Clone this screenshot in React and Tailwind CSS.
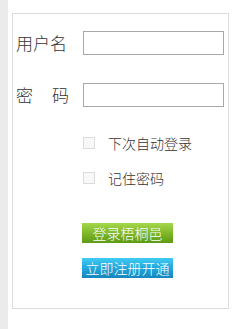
export default function App() {
  return (
    <div className="flex h-[329px] w-[247px] bg-white" style={{ fontFamily: '"Noto Sans CJK SC", sans-serif' }}>
      <div className="w-[8px] shrink-0 bg-[#ebebeb]" />
      <div className="pl-[4px] pt-[13px]">
        <div className="flex h-[296px] w-[217px] flex-col border border-[#dcdcdc] pl-[3px]">
          <div className="mt-[17px] flex items-center">
            <span className="w-[67px] text-[17px] font-light leading-[20px] text-[#333]">用户名</span>
            <input className="h-[24px] w-[141px] border border-[#a9a9a9] bg-white outline-none" />
          </div>
          <div className="mt-[28px] flex items-center">
            <span className="flex w-[67px] gap-[19px] text-[17px] font-light leading-[20px] text-[#333]">
              <span>密</span>
              <span>码</span>
            </span>
            <input type="password" className="h-[24px] w-[141px] border border-[#a9a9a9] bg-white outline-none" />
          </div>
          <div className="mt-[28px] flex flex-col gap-[19px] pl-[67px]">
            <label className="flex items-center">
              <span className="h-[12px] w-[12px] border border-[#dcdcdc] bg-[#f8f8f8]" />
              <span className="ml-[13px] text-[14px] font-light leading-[16px] text-[#333]">下次自动登录</span>
            </label>
            <label className="flex items-center">
              <span className="h-[12px] w-[12px] border border-[#dcdcdc] bg-[#f8f8f8]" />
              <span className="ml-[13px] text-[14px] font-light leading-[16px] text-[#333]">记住密码</span>
            </label>
          </div>
          <div className="mt-[37px] flex flex-col gap-[15px] pl-[66px]">
            <button className="h-[20px] w-[91px] bg-gradient-to-b from-[#a6d84a] via-[#7fb82a] to-[#5e9a14] text-[14px] font-light leading-[20px] text-white">
              登录梧桐邑
            </button>
            <button className="h-[20px] w-[91px] bg-gradient-to-b from-[#3fcbf2] via-[#22a8dc] to-[#1686bd] text-[14px] font-light leading-[20px] text-white">
              立即注册开通
            </button>
          </div>
        </div>
      </div>
    </div>
  )
}
